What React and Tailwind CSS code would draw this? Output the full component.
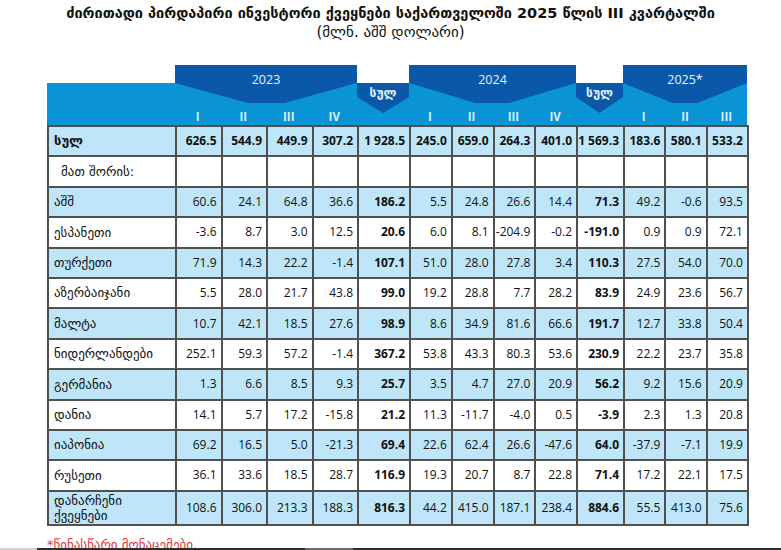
import React from 'react'

const rows = [
  ['სულ', ['626.5', '544.9', '449.9', '307.2', '1 928.5', '245.0', '659.0', '264.3', '401.0', '1 569.3', '183.6', '580.1', '533.2'], true],
  ['მათ შორის:', Array(13).fill('')],
  ['აშშ', ['60.6', '24.1', '64.8', '36.6', '186.2', '5.5', '24.8', '26.6', '14.4', '71.3', '49.2', '-0.6', '93.5']],
  ['ესპანეთი', ['-3.6', '8.7', '3.0', '12.5', '20.6', '6.0', '8.1', '-204.9', '-0.2', '-191.0', '0.9', '0.9', '72.1']],
  ['თურქეთი', ['71.9', '14.3', '22.2', '-1.4', '107.1', '51.0', '28.0', '27.8', '3.4', '110.3', '27.5', '54.0', '70.0']],
  ['აზერბაიჯანი', ['5.5', '28.0', '21.7', '43.8', '99.0', '19.2', '28.8', '7.7', '28.2', '83.9', '24.9', '23.6', '56.7']],
  ['მალტა', ['10.7', '42.1', '18.5', '27.6', '98.9', '8.6', '34.9', '81.6', '66.6', '191.7', '12.7', '33.8', '50.4']],
  ['ნიდერლანდები', ['252.1', '59.3', '57.2', '-1.4', '367.2', '53.8', '43.3', '80.3', '53.6', '230.9', '22.2', '23.7', '35.8']],
  ['გერმანია', ['1.3', '6.6', '8.5', '9.3', '25.7', '3.5', '4.7', '27.0', '20.9', '56.2', '9.2', '15.6', '20.9']],
  ['დანია', ['14.1', '5.7', '17.2', '-15.8', '21.2', '11.3', '-11.7', '-4.0', '0.5', '-3.9', '2.3', '1.3', '20.8']],
  ['იაპონია', ['69.2', '16.5', '5.0', '-21.3', '69.4', '22.6', '62.4', '26.6', '-47.6', '64.0', '-37.9', '-7.1', '19.9']],
  ['რუსეთი', ['36.1', '33.6', '18.5', '28.7', '116.9', '19.3', '20.7', '8.7', '22.8', '71.4', '17.2', '22.1', '17.5']],
  ['დანარჩენი ქვეყნები', ['108.6', '306.0', '213.3', '188.3', '816.3', '44.2', '415.0', '187.1', '238.4', '884.6', '55.5', '413.0', '75.6']],
]

const cols = 'grid grid-cols-[128px_repeat(4,45.5px)_52px_repeat(4,41.75px)_47px_repeat(3,41.33px)]'

function YearGroup({ year, quarters, span }) {
  return (
    <div className={`${span} h-[60px] bg-[#0a93d5] flex flex-col`}>
      <div className="h-[38px] bg-[#0b58a8] text-center pt-[7px] text-[12.5px] leading-[16px] text-[#e6f2ff] [clip-path:polygon(0_0,100%_0,100%_18px,60%_38px,40%_38px,0_18px)]">
        {year}
      </div>
      <div className="mt-[6px] h-[16px] flex">
        {quarters.map((q) => (
          <div key={q} className="flex-1 text-center text-[11.5px] leading-[16px] font-bold text-[#d6f1fd]">
            {q}
          </div>
        ))}
      </div>
    </div>
  )
}

function SulHead() {
  return (
    <div className="h-[60px] flex flex-col">
      <div className="h-[18px]" />
      <div className="flex-1 bg-[#0a93d5]">
        <div className="h-[30px] bg-[#0b58a8] text-center pt-[3px] text-[12px] leading-[14px] font-bold text-[#e6f2ff] [clip-path:polygon(0_0,100%_0,100%_14px,50%_30px,0_14px)]">
          სულ
        </div>
      </div>
    </div>
  )
}

export default function App() {
  return (
    <div className="w-[781px] h-[550px] bg-white relative overflow-hidden text-[#111] font-['Open_Sans','DejaVu_Sans',sans-serif]">
      {/* Title */}
      <div className="pt-[4px] text-center font-['DejaVu_Sans',sans-serif]">
        <h1 className="font-bold text-[14.5px] leading-[18px]">
          ძირითადი პირდაპირი ინვესტორი ქვეყნები საქართველოში 2025 წლის III კვარტალში
        </h1>
        <p className="mt-[1px] text-[15px] leading-[18px]">(მლნ. აშშ დოლარი)</p>
      </div>

      <div className="ml-[47px] mt-[24px] w-[702px]">
        {/* Header band */}
        <div className={cols}>
          <div className="h-[60px] flex flex-col">
            <div className="h-[18px]" />
            <div className="flex-1 bg-[#0a93d5]" />
          </div>
          <YearGroup year="2023" quarters={['I', 'II', 'III', 'IV']} span="col-span-4" />
          <SulHead />
          <YearGroup year="2024" quarters={['I', 'II', 'III', 'IV']} span="col-span-4" />
          <SulHead />
          <YearGroup year="2025*" quarters={['I', 'II', 'III']} span="col-span-3" />
        </div>

        {/* Body */}
        <div className={`${cols} border-l-2 border-t-2 border-[#505050]`}>
          {rows.map(([label, vals, bold], i) => {
            const bg = i % 2 === 0 ? 'bg-[#bee6f8]' : 'bg-white'
            const last = i === rows.length - 1
            const h = last ? 'h-[34px]' : 'h-[30.4px]'
            return (
              <React.Fragment key={label}>
                <div
                  className={`${bg} ${h} border-r-2 border-b-2 border-[#505050] flex items-center text-[13px] font-['DejaVu_Sans',sans-serif] ${
                    i === 1 ? 'pl-[12px]' : 'pl-[5px]'
                  } ${bold ? 'font-bold' : ''} ${last ? 'leading-[15px] pr-[40px]' : ''}`}
                >
                  {label}
                </div>
                {vals.map((v, j) => (
                  <div
                    key={j}
                    className={`${bg} ${h} border-r-2 border-b-2 border-[#505050] flex items-center justify-end pr-[4px] text-[12px] whitespace-nowrap ${
                      bold || j === 4 || j === 9 ? 'font-bold' : ''
                    }`}
                  >
                    {v}
                  </div>
                ))}
              </React.Fragment>
            )
          })}
        </div>
      </div>

      <p className="ml-[47px] mt-[11px] text-[13px] leading-[16px] text-[#e0393e] font-['DejaVu_Sans',sans-serif]">
        *წინასწარი მონაცემები.
      </p>

      {/* bottom strip */}
      <div className="absolute bottom-0 left-0 right-0 h-[2px] flex">
        <div className="w-[37px] bg-[#d0d0d0]" />
        <div className="w-[268px] bg-[#2e2e2e]" />
        <div className="w-[48px] bg-[#6a6a6a]" />
        <div className="flex-1 bg-[#2e2e2e]" />
      </div>
    </div>
  )
}
